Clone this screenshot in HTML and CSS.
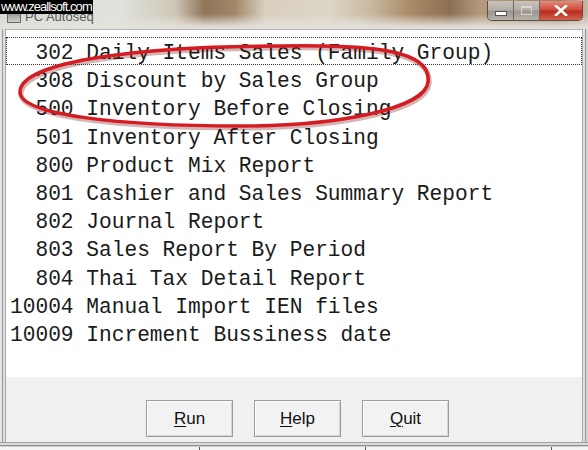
FILE: index.html
```html
<!DOCTYPE html>
<html>
<head>
<meta charset="utf-8">
<link rel="stylesheet" href="styles.css">
</head>
<body>
<div class="window">
  <div class="titlebar">
    <div class="watermark">www.zeallsoft.com</div>
    <div class="title-left">
      <span class="app-icon"></span>
      <span class="title-text">PC Autoseq</span>
    </div>
    <div class="caption-buttons">
      <span class="cap cap-min"><span class="min-glyph"></span></span>
      <span class="cap cap-max"><span class="max-glyph"></span></span>
      <span class="cap cap-close">
        <svg width="14" height="11" viewBox="0 0 14 11"><path d="M2 1 L12 10 M12 1 L2 10" stroke="#fff" stroke-width="2.6" stroke-linecap="square"/></svg>
      </span>
    </div>
  </div>
  <div class="client-row">
    <div class="frame-side frame-left"></div>
    <div class="client">
      <div class="listbox">
        <div class="item selected">  302 Daily Items Sales (Family Group)</div>
        <div class="item">  308 Discount by Sales Group</div>
        <div class="item">  500 Inventory Before Closing</div>
        <div class="item">  501 Inventory After Closing</div>
        <div class="item">  800 Product Mix Report</div>
        <div class="item">  801 Cashier and Sales Summary Report</div>
        <div class="item">  802 Journal Report</div>
        <div class="item">  803 Sales Report By Period</div>
        <div class="item">  804 Thai Tax Detail Report</div>
        <div class="item">10004 Manual Import IEN files</div>
        <div class="item">10009 Increment Bussiness date</div>
      </div>
      <div class="button-panel">
        <button class="btn"><u>R</u>un</button>
        <button class="btn"><u>H</u>elp</button>
        <button class="btn"><u>Q</u>uit</button>
      </div>
    </div>
    <div class="frame-side frame-right"></div>
  </div>
  <div class="frame-bottom"></div>
  <div class="statusbar">
    <span class="sep sep1"></span>
    <span class="sep sep2"></span>
    <span class="sep sep3"></span>
  </div>
</div>
<svg class="annotation" width="588" height="450" viewBox="0 0 588 450">
  <path d="M 20 92 C 20 60, 150 46, 280 46 C 380 44, 432 52, 428 82 C 426 108, 340 126, 240 126 C 120 126, 20 115, 20 92 Z" fill="none" stroke="#6a0c0c" stroke-opacity="0.3" stroke-width="5" transform="translate(1 2)"/>
  <path d="M 20 92 C 20 60, 150 46, 280 46 C 380 44, 432 52, 428 82 C 426 108, 340 126, 240 126 C 120 126, 20 115, 20 92 Z" fill="none" stroke="#d61c22" stroke-width="3.5"/>
</svg>
</body>
</html>
```

FILE: styles.css
```css
html, body {
  margin: 0;
  padding: 0;
}
body {
  width: 588px;
  height: 450px;
  overflow: hidden;
  position: relative;
  background: #e8e8e8;
}
.window {
  width: 588px;
  height: 450px;
  display: flex;
  flex-direction: column;
}
.titlebar {
  height: 29px;
  flex: none;
  position: relative;
  display: flex;
  align-items: flex-start;
  justify-content: space-between;
  background:
    linear-gradient(to bottom, rgba(230,228,222,0) 0px, rgba(230,228,222,0) 14px, rgba(228,226,220,0.9) 26px, #e2e0da 29px),
    linear-gradient(to right, #d3d9d2 0px, #dfe3dc 120px, #cfc6b6 175px, #8f7458 205px, #a48769 235px, #d8cfbf 265px, #ddd5c7 330px, #c9b9a1 370px, #a98b68 410px, #8d6f53 450px, #b39a7c 480px, #9b8068 560px, #c8b8a6 588px);
}
.watermark {
  position: absolute;
  left: 0;
  top: 0;
  height: 14px;
  padding: 0 1px 0 1px;
  background: #000;
  color: #fff;
  font-family: "Liberation Sans", Arial, sans-serif;
  font-size: 13px;
  letter-spacing: -0.95px;
  line-height: 14px;
  z-index: 2;
}
.title-left {
  display: flex;
  align-items: center;
  gap: 4px;
  padding: 9px 0 0 7px;
}
.app-icon {
  width: 12px;
  height: 8px;
  border: 1px solid #6a6a6a;
  background: linear-gradient(#9a9a9a, #d0d0d0);
  margin-top: 2px;
}
.title-text {
  font-family: "Liberation Sans", Arial, sans-serif;
  font-size: 13px;
  color: #5a5a5a;
}
.caption-buttons {
  display: flex;
  margin: 1px 5px 0 0;
  border: 1px solid #5b4f45;
  border-top: none;
  border-radius: 0 0 5px 5px;
  overflow: hidden;
  height: 19px;
}
.cap {
  display: flex;
  align-items: center;
  justify-content: center;
  height: 19px;
}
.cap-min, .cap-max {
  width: 25px;
  background: linear-gradient(to bottom, #c9c3bd 0%, #b6afa8 45%, #9d958e 55%, #b8b1aa 100%);
  border-right: 1px solid #6c635b;
}
.min-glyph {
  width: 10px;
  height: 3px;
  background: #fff;
  border: 1px solid #555;
  margin-top: 6px;
}
.max-glyph {
  width: 9px;
  height: 6px;
  border: 1px solid #dedede;
  border-top-width: 2px;
  opacity: 0.8;
}
.cap-close {
  width: 42px;
  background: linear-gradient(to bottom, #e48a7c 0%, #cf4c3c 45%, #b82d1e 55%, #d4604c 100%);
}
.client-row {
  display: flex;
  height: 413px;
  flex: none;
}
.frame-side {
  width: 6px;
  flex: none;
}
.frame-left {
  background: linear-gradient(to right, #e4e4e4 0px, #e4e4e4 2px, #9b9b9b 2px, #9b9b9b 3px, #d8d8d8 3px, #e2e2e2 5px, #a8a8a8 5px);
}
.frame-right {
  background: linear-gradient(to right, #a8a8a8 0px, #a8a8a8 1px, #e4e4e4 1px, #dcdcdc 3px, #9b9b9b 3px, #9b9b9b 4px, #d6d6d6 4px);
}
.client {
  flex: 1;
  display: flex;
  flex-direction: column;
  background: #f0f0f0;
}
.listbox {
  height: 348px;
  flex: none;
  background: #fff;
  border-top: 1px solid #b4b4b4;
  padding-top: 7px;
  box-sizing: border-box;
}
.item {
  height: 28.2px;
  padding-top: 5px;
  line-height: 23.2px;
  padding-left: 4px;
  font-family: "Liberation Mono", "Courier New", monospace;
  font-size: 21.2px;
  white-space: pre;
  color: #1a1a1a;
  box-sizing: border-box;
}
.item.selected {
  outline: 1px dotted #333;
  outline-offset: -1px;
}
.button-panel {
  flex: 1;
  display: flex;
  align-items: flex-start;
  gap: 21px;
  padding: 23px 0 0 140px;
}
.btn {
  width: 87px;
  height: 37px;
  margin: 0;
  padding: 0;
  background: #f2f2f2;
  border: 1px solid #9c9c9c;
  box-shadow: inset 1px 1px 0 #ffffff, inset -1px -1px 0 #d4d4d4;
  font-family: "Liberation Sans", Arial, sans-serif;
  font-size: 17px;
  color: #111;
}
.btn u {
  text-decoration-thickness: 1px;
  text-underline-offset: 2px;
}
.frame-bottom {
  height: 5px;
  flex: none;
  background: linear-gradient(to bottom, #a0a0a0 0px, #a0a0a0 1px, #e0e0e0 1px, #d8d8d8 3px, #8e8e8e 3px, #8e8e8e 4px, #cfcfcf 4px);
}
.statusbar {
  flex: 1;
  display: flex;
  background: #f4f4f4;
}
.sep {
  width: 1px;
  height: 3px;
  background: #555;
}
.sep1 { margin-left: 199px; }
.sep2 { margin-left: 165px; }
.sep3 { margin-left: 185px; }
.annotation {
  position: absolute;
  left: 0;
  top: 0;
  pointer-events: none;
}
```
